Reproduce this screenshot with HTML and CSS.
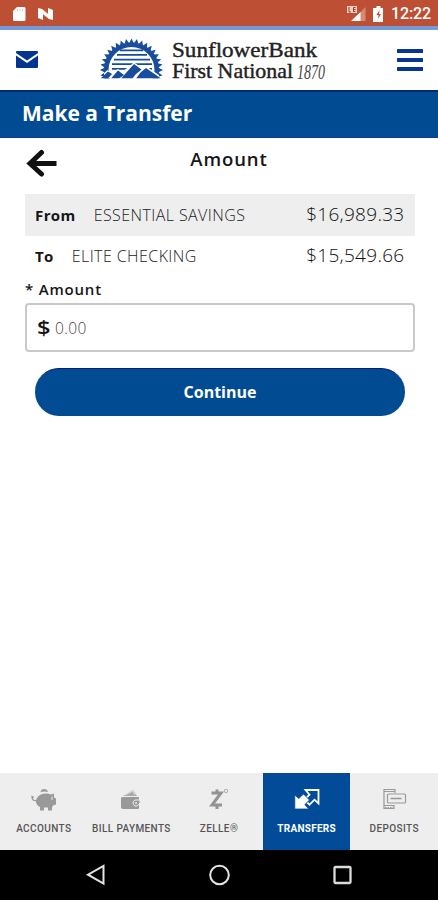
FILE: index.html
```html
<!DOCTYPE html>
<html lang="en">
<head>
<meta charset="utf-8">
<meta name="viewport" content="width=device-width, initial-scale=1">
<title>Make a Transfer</title>
<link rel="stylesheet" href="styles.css">
</head>
<body>
<div class="phone">
  <div class="status">
    <svg class="status-left" width="44" height="16" viewBox="0 0 44 16" fill="#fff">
      <path d="M5 1h7q1.500 0 1.500 1.500v11q0 1.500-1.500 1.500H2.500Q1 15 1 13.500V5z"/>
      <path d="M5.500 3v2.500M8 3v2.500M10.500 3v2.500" stroke="#e5b5a3" stroke-width=".8"/>
      <path d="M26 2l4 1 6 5V2l5 2v10l-4-1-6-5v6l-5-2z"/>
      <path d="M31 8l5 4M31 4l5 4" stroke="#e9c4b6" stroke-width=".7"/>
    </svg>
    <svg class="status-right" width="42" height="18" viewBox="0 0 42 18">
      <path d="M19.500 2v14H6z" fill="#d58b73"/>
      <path d="M14.500 7v9H5z" fill="#fff"/>
      <rect x="1" y="1" width="10" height="7" fill="#f0cfc4"/>
      <path d="M3 2v5h2M9.500 2.500h-2v4h2M7.500 4.500h2" fill="none" stroke="#a23a25" stroke-width="1"/>
      <path d="M30.500 1h4v2h2.500v14h-10V3h3.500z" fill="#fff"/>
      <path d="M33.500 5l-3 5h2l-.5 4 3-5h-2z" fill="#bd5034"/>
    </svg>
    <span class="clock">12:22</span>
  </div>
  <header class="header">
    <svg class="mail" width="22" height="17" viewBox="0 0 22 17">
      <path d="M1 0h20q1 0 1 1v1L11 9.500 0 2V1Q0 0 1 0zM0 4.500l11 7.500 11-7.500V16q0 1-1 1H1q-1 0-1-1z" fill="#03348f"/>
    </svg>
    <svg class="logo" width="230" height="46" viewBox="0 0 230 46">
      <defs>
        <path id="tooth" d="M-2.200 -27L0 -31.500L2.200 -27z"/>
        <g id="teeth">
          <use href="#tooth"/><use href="#tooth" transform="rotate(10)"/><use href="#tooth" transform="rotate(20)"/>
          <use href="#tooth" transform="rotate(30)"/><use href="#tooth" transform="rotate(40)"/><use href="#tooth" transform="rotate(50)"/>
        </g>
        <clipPath id="horizon"><rect x="0" y="0" width="66" height="41.500"/></clipPath>
      </defs>
      <g clip-path="url(#horizon)" fill="#174c9f">
        <g transform="translate(33.500 33)">
          <use href="#teeth" transform="rotate(-120)"/><use href="#teeth" transform="rotate(-60)"/>
          <use href="#teeth"/><use href="#teeth" transform="rotate(60)"/>
          <circle r="25.300" fill="none" stroke="#174c9f" stroke-width="4.600"/>
        </g>
        <path d="M22 12.600h23v1.700H22zM19 17h30v1.700H19zM16 21.700h36v1.700H16zM14 26.300h40v1.700H14zM14 31h40v1.700H14z"/>
        <path d="M6 41.500V36l3.500-3 4 3 6.500-4 4 3 12-9.500 8.500 5.500 4-1.500L61 38v4z" fill="#fff"/>
        <path d="M2.500 41.500L10 34.500l4 2.500-4 4.500zM13 41.500l7-8 6 4.500-5 3.500zM23 41.500L36 27l7.500 5.500-6 5-3 4zM38 41.500l4.500-6L48 31l15 10.500z"/>
      </g>
      <g class="logo-text">
        <text x="74" y="20" textLength="145" lengthAdjust="spacingAndGlyphs">SunflowerBank</text>
        <text x="74" y="41" textLength="121" lengthAdjust="spacingAndGlyphs">First National</text>
        <text class="year" x="199" y="42" textLength="28" lengthAdjust="spacingAndGlyphs">1870</text>
      </g>
    </svg>
    <svg class="menu" width="26" height="22" viewBox="0 0 26 22" fill="#08358f">
      <rect y="0" width="26" height="4" rx=".5"/><rect y="9" width="26" height="4" rx=".5"/><rect y="18" width="26" height="4" rx=".5"/>
    </svg>
  </header>
  <div class="title"><h1>Make a Transfer</h1></div>
  <main class="content">
    <div class="step">
      <svg class="back" width="31" height="29" viewBox="0 0 31 29" fill="none" stroke="#111" stroke-width="5" stroke-linecap="round">
        <path d="M15.500 3.500L4 14.500l11.500 10.500" stroke-linejoin="miter"/><path d="M6 14.500h22" stroke-linecap="square"/>
      </svg>
      <h2>Amount</h2>
    </div>
    <div class="account from"><b>From</b><span class="name">ESSENTIAL SAVINGS</span><span class="sum">$16,989.33</span></div>
    <div class="account to"><b>To</b><span class="name">ELITE CHECKING</span><span class="sum">$15,549.66</span></div>
    <div class="label">* Amount</div>
    <div class="field"><span class="dollar">$</span><span class="value">0.00</span></div>
    <div class="button">Continue</div>
  </main>
  <nav class="tabs">
    <div class="tab">
      <svg width="28" height="26" viewBox="0 0 28 26" fill="#999">
        <path d="M8 9.500q3-3 8-3 3 0 5 1l3-1v4l2 1v6l-3 1-1 2v3h-4v-3h-4v3h-4v-3.500Q6 18 6 14q0-2 2-4.500z"/>
        <path d="M10.500 5.200a3.800 3.800 0 0 1 7.400-.3q-4-.8-7.400.3z"/>
        <path d="M7 13.500Q2 14.500 2 9.500l1.800.8" fill="none" stroke="#999" stroke-width="1.300"/><path d="M22 9.500v3.500" stroke="#eee"/>
      </svg>
      <span>ACCOUNTS</span>
    </div>
    <div class="tab">
      <svg width="24" height="26" viewBox="0 0 24 26">
        <path d="M4 9L14 3l4 6z" fill="#aaa"/><path d="M6 8l8-4 2 4" fill="none" stroke="#eee" stroke-width=".8"/>
        <path d="M3 10h16q1 0 1 1v10q0 1-1 1H4q-2 0-2-2V11z" fill="#999"/>
        <path d="M21 13h-5q-2 1-2 3t2 3h2l3-3z" fill="#999" stroke="#eee"/><circle cx="17" cy="16" r="1" fill="#eee"/>
      </svg>
      <span>BILL PAYMENTS</span>
    </div>
    <div class="tab">
      <svg width="24" height="26" viewBox="0 0 24 26" fill="none" stroke="#939393">
        <path d="M4.500 6h9.500L5 18h10M10 2.500V6M10 18.500V22" stroke-width="3"/><circle cx="19" cy="4" r="1.700" stroke-width=".7"/>
      </svg>
      <span>ZELLE®</span>
    </div>
    <div class="tab active">
      <svg width="26" height="26" viewBox="0 0 26 26">
        <path d="M11.500 3h13v13.500l-4-3.800-5 5-5-5 5-5z" fill="none" stroke="#fff" stroke-width="1.800"/>
        <path d="M.8 8l4 3.500L9.500 7l6 6-4.700 4.700 4 4.300H.8z" fill="#fff" stroke="#014b98" stroke-width=".8"/>
      </svg>
      <span>TRANSFERS</span>
    </div>
    <div class="tab">
      <svg width="26" height="26" viewBox="0 0 26 26" fill="none" stroke="#999" stroke-width="1.200">
        <path d="M14 6V2.500H3v19h10V18M3 4.500h11M3 18.500h10"/><rect x="6.500" y="7" width="18" height="9" rx="1"/>
        <path d="M9.500 11.500h11" stroke-width="1.600"/><path d="M4 20.500h8" stroke-dasharray="1.500 1"/>
      </svg>
      <span>DEPOSITS</span>
    </div>
  </nav>
  <div class="system">
    <svg width="20" height="22" viewBox="0 0 20 22"><path d="M18.500 2v17.500L3 10.700z" fill="none" stroke="#e4e4e4" stroke-width="2"/></svg>
    <svg width="22" height="22" viewBox="0 0 22 22"><circle cx="11.500" cy="11" r="9.300" fill="none" stroke="#e4e4e4" stroke-width="2"/></svg>
    <svg width="20" height="22" viewBox="0 0 20 22"><rect x="1.500" y="3" width="16" height="16" rx="1" fill="none" stroke="#dcdcdc" stroke-width="2.300"/></svg>
  </div>
</div>
</body>
</html>
```
FILE: styles.css
```css
* { box-sizing: border-box; }
body { margin: 0; background: #fff; font-family: "Open Sans", sans-serif; color: #161616; }
h1, h2 { margin: 0; }
svg { display: block; flex: none; }
.phone { width: 438px; height: 900px; display: flex; flex-direction: column; overflow: hidden; }
.status { height: 26px; flex: none; background: #bd5034; display: flex; align-items: center; padding: 1px 8px 0 12px; }
.status-right { margin-left: auto; margin-right: 3px; }
.clock { width: 39px; font: 500 16px/20px Roboto, sans-serif; color: #fff; letter-spacing: -.15px; white-space: nowrap; padding-top: 1px; }
.header { height: 64px; flex: none; border-top: 4px solid #7499d8; display: flex; align-items: center; padding: 0 15px 0 16px; }
.mail { margin-bottom: 1px; }
.logo { margin: 0 0 0 60px; height: 46px; width: 230px; overflow: visible; }
.logo-text { font: 21.500px "Liberation Serif", serif; fill: #222; stroke: #222; stroke-width: .4px; }
.logo-text .year { font-style: italic; font-size: 20px; fill: #444; stroke: none; }
.menu { margin-left: auto; }
.title { height: 48px; flex: none; background: #014b93; border-top: 2px solid #052a75; border-bottom: 1px solid #0b3a96; display: flex; align-items: center; padding: 0 22px 3px; }
.title h1 { color: #fff; font-size: 21px; line-height: 28px; font-weight: 700; }
.content { flex: 1; display: flex; flex-direction: column; padding: 0 23px 0 25px; }
.step { height: 56px; display: grid; grid-template-columns: 60px 1fr 42px; align-items: start; padding-top: 9px; }
.back { margin: 2px 0 0 1px; }
.step h2 { font-size: 18.500px; line-height: 24px; font-weight: 600; text-align: center; letter-spacing: .9px; }
.account { height: 42px; display: flex; align-items: center; padding: 0 11px 1px 10px; }
.account b { font-size: 15px; font-weight: 700; letter-spacing: .4px; }
.from { background: #eee; }
.to { padding-bottom: 3px; }
.name { font-size: 16px; font-weight: 350; margin-left: 18px; color: #222; letter-spacing: .42px; }
.sum { margin-left: auto; font-size: 19px; font-weight: 350; color: #111; letter-spacing: .3px; margin-right: -.5px; padding-bottom: 1px; }
.label { height: 25px; font-size: 15px; line-height: 22px; font-weight: 600; letter-spacing: .8px; }
.field { height: 49px; border: 2px solid #c9c9c9; border-radius: 4px; display: flex; align-items: center; padding-left: 10px; }
.dollar { width: 18px; font: 600 19px/24px "Open Sans", sans-serif; transform: scaleX(1.25); transform-origin: left; }
.value { font-size: 15.500px; font-weight: 350; color: #444; letter-spacing: .4px; }
.button { height: 48px; margin: 16px 10px 0; border-radius: 24px; background: #014b93; border-top: 1px solid #031b79; color: #fff; font-size: 16px; font-weight: 700; display: flex; align-items: center; justify-content: center; padding-bottom: 2px; }
.tabs { height: 77px; flex: none; background: #eee; display: grid; grid-template-columns: repeat(5, 1fr); }
.tab { display: flex; flex-direction: column; align-items: center; padding-top: 14px; font: 500 10px/14px Roboto, sans-serif; letter-spacing: .4px; color: #555; white-space: nowrap; }
.tab span { margin-top: 9px; }
.tab.active { background: #014b98; color: #fff; font-weight: 700; letter-spacing: .25px; }
.system { height: 50px; flex: none; background: #000; display: flex; justify-content: center; align-items: center; gap: 103px; }
```
